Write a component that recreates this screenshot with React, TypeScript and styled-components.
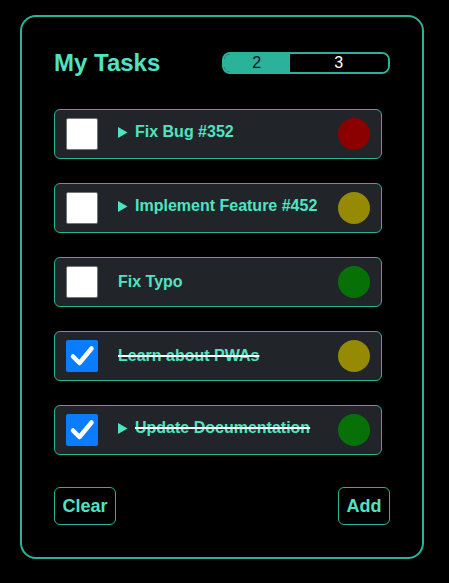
import styled, { createGlobalStyle } from 'styled-components'

const GlobalStyle = createGlobalStyle`
    html, body {
        margin: 0;
        padding: 0;
        background: #000;
        font-family: "Liberation Sans", Arial, sans-serif;
    }
`

const Card = styled.div`
    box-sizing: border-box;
    width: 404px;
    margin: 15px 0 0 20px;
    padding: 32px;
    border: 2px solid #2ab39a;
    border-radius: 16px;
    background: #000;
    display: flex;
    flex-direction: column;
    gap: 32px;
`

const Header = styled.div`
    display: flex;
    align-items: center;
    justify-content: space-between;
    height: 28px;
`

const Title = styled.h1`
    margin: 0;
    font-size: 24px;
    font-weight: bold;
    color: #50e3c2;
`

const Progress = styled.div`
    box-sizing: border-box;
    width: 168px;
    height: 22px;
    display: flex;
    border: 2px solid #2ab39a;
    border-radius: 8px;
    overflow: hidden;
`

const Segment = styled.div<{ $filled?: boolean }>`
    display: flex;
    align-items: center;
    justify-content: center;
    font-size: 16px;
    background: ${p => (p.$filled ? '#2ab39a' : '#000')};
    color: ${p => (p.$filled ? '#111' : '#fff')};
`

const List = styled.div`
    display: flex;
    flex-direction: column;
    gap: 24px;
`

const Row = styled.div`
    box-sizing: border-box;
    width: 328px;
    height: 50px;
    display: flex;
    align-items: center;
    padding: 0 11px;
    background: #212529;
    border: 1px solid #2ab39a;
    border-radius: 6px;
`

const Check = styled.div<{ $checked?: boolean }>`
    box-sizing: border-box;
    width: 32px;
    height: 32px;
    flex: none;
    border-radius: 2px;
    display: flex;
    align-items: center;
    justify-content: center;
    background: ${p => (p.$checked ? '#0a7cff' : '#fff')};
    border: ${p => (p.$checked ? 'none' : '1px solid #767676')};
`

const Label = styled.div<{ $summary?: boolean }>`
    flex: 1;
    display: flex;
    align-items: center;
    margin-left: 20px;
    padding-bottom: ${p => (p.$summary ? '4px' : '0')};
    font-size: 16px;
    font-weight: bold;
    color: #50e3c2;
    white-space: nowrap;
`

const Text = styled.span<{ $done?: boolean }>`
    text-decoration: ${p => (p.$done ? 'line-through' : 'none')};
    text-decoration-color: #fff;
    text-decoration-thickness: 2px;
`

const Arrow = styled.svg`
    flex: none;
    margin-right: 7px;
`

const Dot = styled.div<{ $color: string }>`
    width: 32px;
    height: 32px;
    flex: none;
    border-radius: 50%;
    background: ${p => p.$color};
`

const Footer = styled.div`
    display: flex;
    justify-content: space-between;
`

const Button = styled.button`
    box-sizing: border-box;
    height: 38px;
    padding: 0 7.5px;
    background: #000;
    border: 1px solid #2ab39a;
    border-radius: 6px;
    color: #50e3c2;
    font-family: "Liberation Sans", Arial, sans-serif;
    font-size: 18px;
    font-weight: bold;
`

const tasks = [
    { title: 'Fix Bug #352', done: false, more: true, color: '#8b0000' },
    { title: 'Implement Feature #452', done: false, more: true, color: '#968a04' },
    { title: 'Fix Typo', done: false, more: false, color: '#077107' },
    { title: 'Learn about PWAs', done: true, more: false, color: '#968a04' },
    { title: 'Update Documentation', done: true, more: true, color: '#077107' },
]

const CheckMark = () => (
    <svg width="26" height="26" viewBox="0 0 26 26">
        <path d="M4 13.5 L10.5 20 L22.5 5.5" fill="none" stroke="#fff" strokeWidth="4.5" strokeLinecap="round" strokeLinejoin="round" />
    </svg>
)

const App = () => {
    const done = tasks.filter(t => t.done).length
    const open = tasks.length - done

    return (
        <>
            <GlobalStyle />
            <Card>
                <Header>
                    <Title>My Tasks</Title>
                    <Progress>
                        <Segment $filled style={{ flex: done }}>{done}</Segment>
                        <Segment style={{ flex: open }}>{open}</Segment>
                    </Progress>
                </Header>
                <List>
                    {tasks.map(t => (
                        <Row key={t.title}>
                            <Check $checked={t.done}>{t.done && <CheckMark />}</Check>
                            <Label $summary={t.more}>
                                {t.more && (
                                    <Arrow width="10" height="11" viewBox="0 0 10 11">
                                        <path d="M0 0 L9.5 5.5 L0 11 Z" fill="#50e3c2" />
                                    </Arrow>
                                )}
                                <Text $done={t.done}>{t.title}</Text>
                            </Label>
                            <Dot $color={t.color} />
                        </Row>
                    ))}
                </List>
                <Footer>
                    <Button>Clear</Button>
                    <Button>Add</Button>
                </Footer>
            </Card>
        </>
    )
}

export default App
